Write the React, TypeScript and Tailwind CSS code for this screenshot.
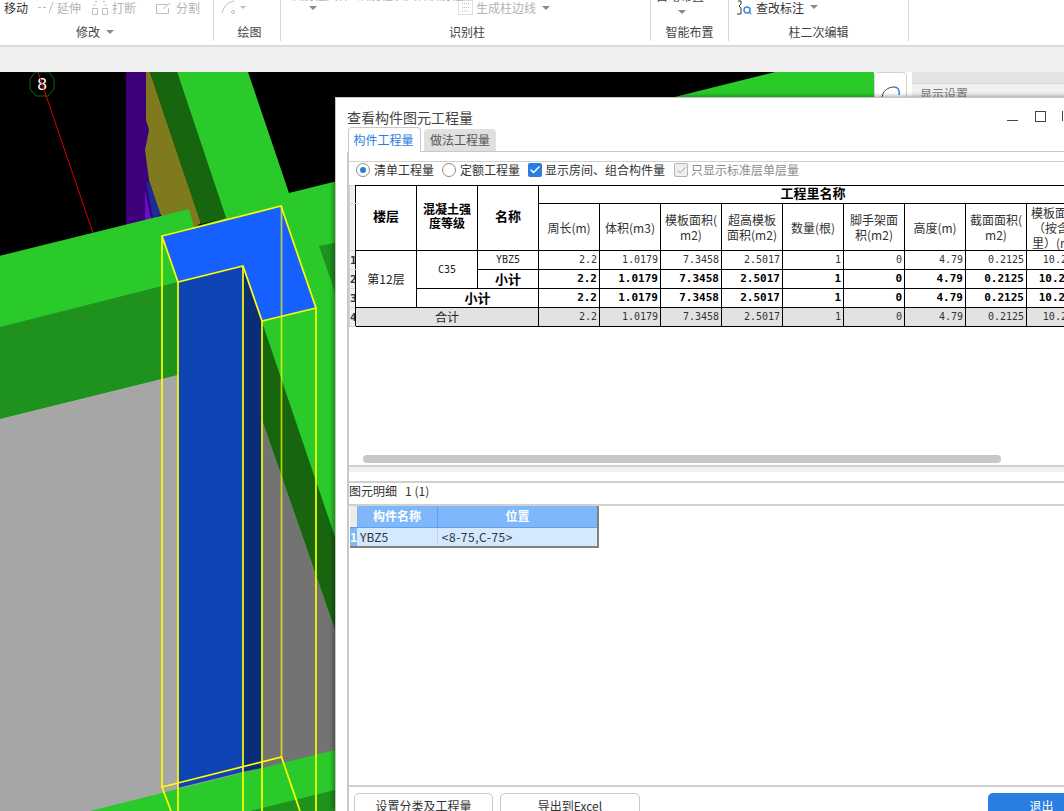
import React from "react";
import { Check } from "lucide-react";

const sans = "font-['Noto_Sans_CJK_SC','Noto_Sans',sans-serif]";
const mono = "font-['DejaVu_Sans_Mono','Noto_Sans_CJK_SC',monospace]";

const Caret = ({ className = "" }: { className?: string }) => (
  <span className={`inline-block w-0 h-0 border-x-[4px] border-x-transparent border-t-[4px] border-t-[#8a8a8a] ${className}`} />
);

function Group({ w, label, caret, labelPad, children }: { w: string; label: string; caret?: boolean; labelPad?: string; children?: React.ReactNode }) {
  return (
    <div className={`${w} h-[41px] shrink-0 flex flex-col border-r border-[#d8d8d8] overflow-hidden`}>
      <div className="h-[24px] flex items-start relative">{children}</div>
      <div className={`flex-1 flex items-center justify-center gap-[6px] text-[12px] text-[#444] ${labelPad ?? ""}`}>
        <span>{label}</span>
        {caret && <Caret />}
      </div>
    </div>
  );
}

function Scene() {
  return (
    <svg viewBox="0 72 874 739" className="w-[874px] h-[739px] shrink-0 block">
      <rect x="0" y="72" width="874" height="739" fill="#000" />
      <polygon points="126,72 146,72 149,130 150,180 160,225 126,225" fill="#3d007a" />
      <polygon points="145,190 150,215 153,222 145,225" fill="#6a10c4" />
      <polygon points="146,72 150,72 201,223 194,228 160,215 149,180 145,150 149,130 146,120" fill="#807a1e" />
      <polygon points="146,182 149,182 161,215 153,218" fill="#1c2a9a" />
      <polygon points="150,72 177,72 226,218 201,224" fill="#17660f" />
      <polygon points="177,72 248,72 289,193 775,72 874,72 874,811 0,811 0,255.7 189,209 194,227 226,218" fill="#2aca2a" />
      <polygon points="0,327 178,282 178,375 0,419" fill="#1f911d" />
      <polygon points="0,419 178,375 262,375 262,768 90,811 0,811" fill="#a6a6a6" />
      <polygon points="262,322 335,537 335,630 262,420" fill="#17660f" />
      <polygon points="262,420 335,630 335,750 262,768" fill="#737373" />
      <polygon points="319,246 335,243 335,292" fill="#1f911d" />
      <polygon points="335,790 335,811 250,811" fill="#1f911d" />
      <polygon points="178,282 243,266 243,772 178,788" fill="#0f44b5" />
      <polygon points="243,266 262,321 262,768 243,772" fill="#0a2d7a" />
      <polygon points="162,236 281,206 316,308 262,321 243,266 178,282" fill="#1560ff" />
      <g stroke="#ffff00" strokeWidth="1.7" fill="none">
        <polygon points="162,236 281,206 316,308 262,321 243,266 178,282" />
        <line x1="162" y1="236" x2="162" y2="787" />
        <line x1="178" y1="282" x2="178" y2="811" />
        <line x1="243" y1="266" x2="243" y2="811" />
        <line x1="262" y1="321" x2="262" y2="811" />
        <line x1="281.5" y1="206" x2="281.5" y2="757" strokeOpacity="0.7" />
        <line x1="316" y1="308" x2="316" y2="811" />
        <polyline points="171,811 162,787 281.5,757 300,811" />
      </g>
      <polygon points="35,72 49,72 54,79 54,89 48,96 36,96 30,89 30,79" fill="none" stroke="#0a6b0a" strokeWidth="1" />
      <text x="42" y="90" textAnchor="middle" fontSize="16" fill="#fff" fontFamily="DejaVu Sans, sans-serif">8</text>
      <line x1="38" y1="72" x2="93" y2="233" stroke="#e00000" strokeWidth="1" />
    </svg>
  );
}

const hdrs: React.ReactNode[] = [
  <>周长(m)</>,
  <>体积(m3)</>,
  <>模板面积(<br />m2)</>,
  <>超高模板<br />面积(m2)</>,
  <>数量(根)</>,
  <>脚手架面<br />积(m2)</>,
  <>高度(m)</>,
  <>截面面积(<br />m2)</>,
  <>模板面积(<br />（按含模<br />里）(m2)</>,
];
const vals = ["2.2", "1.0179", "7.3458", "2.5017", "1", "0", "4.79", "0.2125", "10.2375"];

const cell = "border border-black p-0 overflow-hidden leading-[16px]";
const num = `${cell} text-right pr-[2px] whitespace-nowrap`;
const numC = "bg-[#f0f0f0] border border-[#d4d4d4] border-r-black p-0 text-[11px] font-bold text-[#334] text-center overflow-hidden leading-none";

function Values({ bold, grey }: { bold?: boolean; grey?: boolean }) {
  return (
    <>
      {vals.map((v, i) => (
        <td key={i} className={`${num} ${bold ? "font-bold text-[11px] text-black" : "text-[10px] text-[#333]"} ${grey ? "bg-[#e2e2e2]" : ""}`}>
          {v}
        </td>
      ))}
    </>
  );
}

function QtyTable() {
  return (
    <table className={`table-fixed border-collapse w-[738px] ${mono} text-[#222]`}>
      <colgroup>
        <col className="w-[6px]" />
        {Array.from({ length: 12 }).map((_, i) => (
          <col key={i} className="w-[61px]" />
        ))}
      </colgroup>
      <tbody>
        <tr className="h-[18px]">
          <td className={numC} />
          <td rowSpan={2} className={`${cell} !pb-[4px] text-center font-bold text-[13px] text-black ${sans}`}>楼层</td>
          <td rowSpan={2} className={`${cell} !pb-[4px] text-center font-bold text-[12px] !leading-[14px] text-black ${sans}`}>混凝土强<br />度等级</td>
          <td rowSpan={2} className={`${cell} !pb-[4px] text-center font-bold text-[13px] text-black ${sans}`}>名称</td>
          <td colSpan={9} className={`${cell} !pb-[3px] text-center font-bold text-[13px] !leading-[14px] text-black ${sans}`}>
            <span className="block w-[548px]">工程里名称</span>
          </td>
        </tr>
        <tr className="h-[47px]">
          <td className={numC} />
          {hdrs.map((h, i) => (
            <td key={i} className={`${cell} text-center text-[12px] !leading-[15px] whitespace-nowrap text-[#333] ${sans}`}>{h}</td>
          ))}
        </tr>
        <tr className="h-[19px]">
          <td className={numC}>1</td>
          <td rowSpan={3} className={`${cell} text-center text-[12px] ${sans}`}>第12层</td>
          <td rowSpan={2} className={`${cell} text-center text-[10px]`}>C35</td>
          <td className={`${cell} text-center text-[10px]`}>YBZ5</td>
          <Values />
        </tr>
        <tr className="h-[19px]">
          <td className={numC}>2</td>
          <td className={`${cell} text-center text-[13px] font-bold text-black ${sans}`}>小计</td>
          <Values bold />
        </tr>
        <tr className="h-[19px]">
          <td className={numC}>3</td>
          <td colSpan={2} className={`${cell} text-center text-[13px] font-bold text-black ${sans}`}>小计</td>
          <Values bold />
        </tr>
        <tr className="h-[19px]">
          <td className={`${numC} bg-[#d8d8d8] text-[#246]`}>4</td>
          <td colSpan={3} className={`${cell} bg-[#e2e2e2] text-center text-[12px] ${sans}`}>合计</td>
          <Values grey />
        </tr>
      </tbody>
    </table>
  );
}

function Radio({ on, label }: { on?: boolean; label: string }) {
  return (
    <label className="flex items-center gap-[4px]">
      <span className="w-[14px] h-[14px] rounded-full border border-[#8c8c8c] bg-white flex items-center justify-center">
        {on && <span className="w-[6px] h-[6px] rounded-full bg-[#2a7de1]" />}
      </span>
      <span>{label}</span>
    </label>
  );
}

function Dialog() {
  return (
    <div className={`absolute left-[335px] top-[97px] w-[760px] h-[714px] bg-white border-t border-l border-[#c4c4c4] shadow-[-2px_-1px_4px_rgba(0,0,0,0.35)] overflow-hidden flex flex-col ${sans}`}>
      <div className="h-[29px] shrink-0 flex items-start pl-[11px]">
        <span className="text-[14px] leading-[20px] text-[#444] mt-[9px]">查看构件图元工程量</span>
        <div className="ml-auto flex items-start gap-[17px] mr-[23px] mt-[13px]">
          <span className="w-[11px] h-px bg-[#444] mt-[9px]" />
          <span className="w-[11px] h-[11px] border border-[#444]" />
          <span className="w-[10px] h-[10px] border-l border-[#444] ml-[-1px]" />
        </div>
      </div>
      <div className="h-[25px] shrink-0 ml-[12px] flex items-end gap-[3px] border-b border-[#c8c8c8] text-[12px]">
        <div className="h-[25px] w-[73px] mb-[-1px] pr-[2px] bg-white border border-b-0 border-[#c8c8c8] rounded-t-[4px] flex items-center justify-center text-[#2a7de1]">构件工程量</div>
        <div className="h-[22px] w-[72px] bg-[#e0e0e0] rounded-t-[4px] flex items-center justify-center text-[#555]">做法工程量</div>
      </div>
      <div className="flex-1 ml-[11px] border-l-2 border-[#c8c8c8] flex flex-col min-h-0">
        <div className="h-[9px] shrink-0" />
        <div className="h-[24px] shrink-0 border-t border-[#d0d0d0] flex items-start pl-[7px] text-[12px] leading-[16px] text-[#333]">
          <div className="flex gap-[8px]">
            <Radio on label="清单工程量" />
            <Radio label="定额工程量" />
            <label className="flex items-center gap-[3px]">
              <span className="w-[14px] h-[14px] rounded-[2px] bg-[#2a7de1] flex items-center justify-center">
                <Check size={12} strokeWidth={3} className="text-white" />
              </span>
              显示房间、组合构件量
            </label>
            <label className="flex items-center gap-[3px] ml-[1px] text-[#8c8c8c]">
              <span className="w-[14px] h-[14px] rounded-[2px] bg-[#efefef] border border-[#b4b4b4] flex items-center justify-center">
                <Check size={11} strokeWidth={2} className="text-[#9c9c9c]" />
              </span>
              只显示标准层单层量
            </label>
          </div>
        </div>
        <div className="h-[270px] shrink-0 overflow-hidden">
          <QtyTable />
        </div>
        <div className="h-[12px] shrink-0 pl-[14px] border-b-2 border-[#d0d0d0]">
          <div className="w-[638px] h-[8px] rounded-full bg-[#c8c8c8]" />
        </div>
        <div className="h-[5px] shrink-0 bg-[#f0f0f0]" />
        <div className="h-[9px] shrink-0" />
        <div className="h-[306px] shrink-0 border-y-2 border-[#d0d0d0] flex flex-col">
          <div className="h-[23px] shrink-0 flex items-start text-[12px] leading-[16px] text-[#333] whitespace-pre border-b-2 border-[#d0d0d0]">图元明细   1 (1)</div>
          <table className="table-fixed border-collapse w-[249px] ml-px text-[12px] border-r-2 border-b-2 border-[#808080]">
            <colgroup>
              <col className="w-[7px]" />
              <col className="w-[80px]" />
              <col className="w-[160px]" />
            </colgroup>
            <tbody>
              <tr className="h-[21px]">
                <td className="bg-[#ececec] p-0" />
                <td className="bg-[#7eb8fb] border-r border-[#5ea0ee] p-0 text-center font-bold text-white">构件名称</td>
                <td className="bg-[#7eb8fb] p-0 text-center font-bold text-white">位置</td>
              </tr>
              <tr className="h-[20px] border-t border-[#5ea0ee]">
                <td className="bg-[#7eb8fb] p-0 text-center font-bold text-white leading-none">1</td>
                <td className="bg-[#d4e9ff] border-r border-[#c4d4e4] p-0 pl-[3px] text-[#333]">YBZ5</td>
                <td className="bg-[#d4e9ff] p-0 pl-[4px] text-[12px] tracking-[0.5px] text-[#333]">&lt;8-75,C-75&gt;</td>
              </tr>
            </tbody>
          </table>
        </div>
        <div className="flex-1 flex items-start justify-between pt-[6px] pl-[5px] text-[12px] text-[#333]">
          <div className="flex gap-[7px]">
            <button className="w-[139px] h-[30px] bg-white border border-[#c8c8c8] rounded-[5px] pb-[4px]">设置分类及工程量</button>
            <button className="w-[140px] h-[30px] bg-white border border-[#c8c8c8] rounded-[5px] pb-[4px]">导出到Excel</button>
          </div>
          <button className="w-[107px] h-[30px] bg-[#2a7de1] text-white rounded-[5px] pb-[4px]">
            <span className="inline-block w-[80px]">退出</span>
          </button>
        </div>
      </div>
    </div>
  );
}

export default function App() {
  const grey = "text-[12px] leading-[16px] text-[#b4b4b4]";
  return (
    <div className={`relative w-[1064px] h-[811px] overflow-hidden bg-white ${sans}`}>
      {/* ribbon */}
      <div className="h-[47px] flex items-start border-b-2 border-[#dadada] bg-white">
        <Group w="w-[214px]" label="修改" caret labelPad="pr-[23px]">
          <span className="ml-[4px] text-[12px] leading-[16px] text-[#333]">移动</span>
          <svg width="18" height="14" viewBox="0 0 18 14" className="ml-[10px] mt-[1px]" fill="none" stroke="#bdbdbd">
            <path d="M0 6.5h3M5 6.5h3M11 12L15 1" />
          </svg>
          <span className={`ml-[1px] ${grey}`}>延伸</span>
          <svg width="18" height="16" viewBox="0 0 18 16" className="ml-[10px]" fill="none" stroke="#bdbdbd">
            <path d="M4 1.5h2M12 1.5h2M1.5 8.5h5v6h-5zM11.5 8.5h5v6h-5zM3 4l1 2M15 4l-1 2" />
          </svg>
          <span className={`ml-[3px] ${grey}`}>打断</span>
          <svg width="17" height="14" viewBox="0 0 17 14" className="ml-[19px] mt-[1px]" fill="none" stroke="#bdbdbd">
            <path d="M12 3.5H1.5v9h12V7M8 8l7-6" />
          </svg>
          <span className={`ml-[4px] ${grey}`}>分割</span>
        </Group>
        <Group w="w-[67px]" label="绘图" labelPad="pt-[5px] pl-[5px]">
          <svg width="30" height="16" viewBox="0 0 30 16" className="ml-[7px]" fill="none" stroke="#bdbdbd">
            <path d="M1 13C3 6 7 2 13 1" />
            <circle cx="12" cy="12" r="1.5" />
            <path d="M19 6h6l-3 3z" fill="#bdbdbd" stroke="none" />
          </svg>
        </Group>
        <Group w="w-[370px]" label="识别柱" labelPad="pt-[5px] pl-[3px]">
          <span className="absolute left-[9px] top-[-13px] text-[12px] leading-[16px] text-[#b4b4b4]">识别柱大样</span>
          <span className="absolute left-[76px] top-[-13px] text-[12px] leading-[16px] text-[#b4b4b4]">识别柱表大样</span>
          <span className="absolute left-[146px] top-[-13px] text-[12px] leading-[16px] text-[#b4b4b4]">识别柱</span>
          <Caret className="absolute left-[28px] top-[6px]" />
          <svg width="15" height="15" viewBox="0 0 15 15" className="absolute left-[177px] top-[0px]" fill="none" stroke="#bdbdbd" strokeDasharray="1 1">
            <rect x="0.5" y="0.5" width="14" height="14" />
            <path d="M4 3.5h7M4 7.5h7M4 11h7" />
          </svg>
          <span className={`absolute left-[195px] top-0 ${grey}`}>生成柱边线</span>
          <Caret className="absolute left-[261px] top-[6px]" />
        </Group>
        <Group w="w-[78px]" label="智能布置" labelPad="pt-[5px]">
          <span className="absolute left-[5px] top-[-12px] text-[12px] leading-[16px] text-[#444]">自动布置</span>
          <Caret className="absolute left-[27px] top-[10px]" />
        </Group>
        <Group w="w-[180px]" label="柱二次编辑" labelPad="pt-[5px]">
          <svg width="18" height="16" viewBox="0 0 18 16" className="ml-[7px]" fill="none">
            <path d="M2 1h3v3L3 6l2 2v6H1" stroke="#333" />
            <circle cx="11" cy="10" r="3" stroke="#3b86e0" strokeWidth="1.5" />
            <path d="M13 12l2 2" stroke="#3b86e0" strokeWidth="1.5" />
          </svg>
          <span className="ml-[2px] text-[12px] leading-[16px] text-[#333]">查改标注</span>
          <Caret className="ml-[6px] mt-[5px]" />
        </Group>
      </div>
      {/* strip */}
      <div className="h-[25px] bg-[#f0f0f0]" />
      {/* workspace */}
      <div className="h-[739px] flex items-start">
        <Scene />
        <div className="w-[33px] h-[26px] shrink-0 bg-white border border-[#d0d0d0] rounded-t-[4px] flex justify-center items-start pt-[13px]">
          <svg width="20" height="14" viewBox="0 0 20 14" fill="none">
            <path d="M1 13C1 5 7 1 13 1" stroke="#444" />
            <path d="M13 1c4 0 6 3 5 8" stroke="#3b86e0" strokeWidth="1.5" />
          </svg>
        </div>
        <div className="w-[5px] shrink-0" />
        <div className="flex-1 flex flex-col">
          <div className="h-[12px] bg-[#e4e4e4] border-b border-[#d4d4d4]" />
          <div className="h-[15px] bg-[#f0f0f0] pl-[8px] text-[12px] leading-[16px] text-[#777] pt-[2px]">显示设置</div>
        </div>
      </div>
      <Dialog />
    </div>
  );
}
